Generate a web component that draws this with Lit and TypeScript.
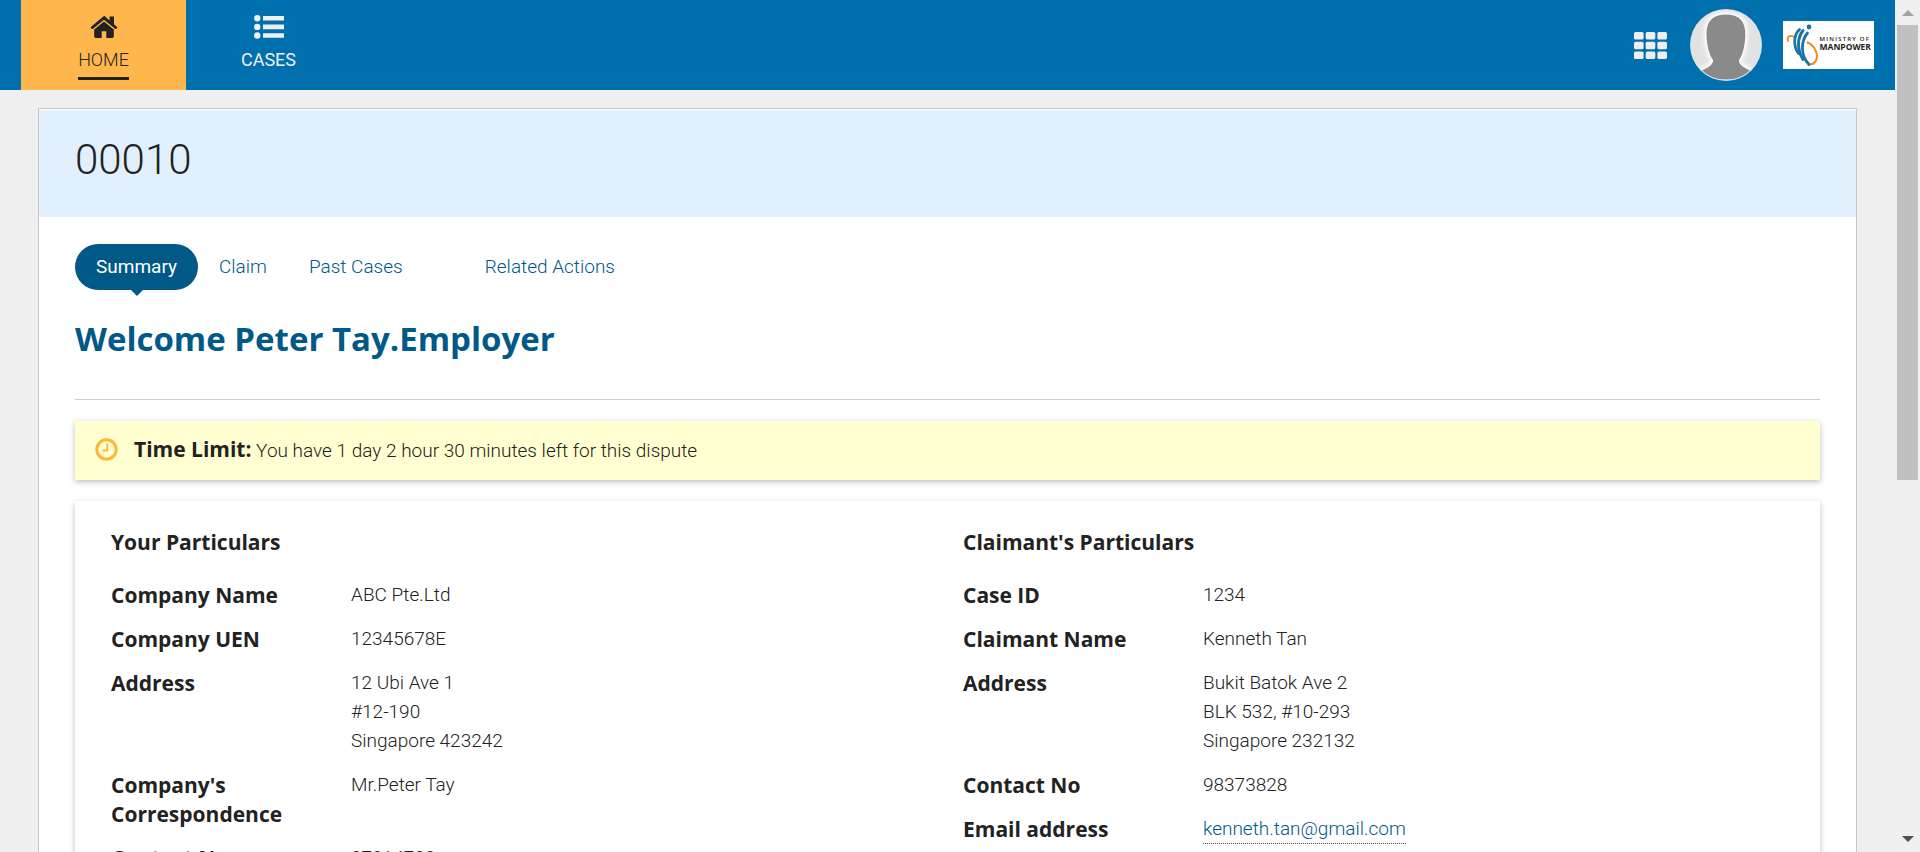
import { LitElement, html, svg, css } from "lit";
import { customElement } from "lit/decorators.js";

interface Row {
  label: string;
  lines: string[];
  href?: string;
}

const EMPLOYER: Row[] = [
  { label: "Company Name", lines: ["ABC Pte.Ltd"] },
  { label: "Company UEN", lines: ["12345678E"] },
  { label: "Address", lines: ["12 Ubi Ave 1", "#12-190", "Singapore 423242"] },
  { label: "Company's Correspondence", lines: ["Mr.Peter Tay"] },
  { label: "Contact No", lines: ["87814788"] },
];

const CLAIMANT: Row[] = [
  { label: "Case ID", lines: ["1234"] },
  { label: "Claimant Name", lines: ["Kenneth Tan"] },
  { label: "Address", lines: ["Bukit Batok Ave 2", "BLK 532, #10-293", "Singapore 232132"] },
  { label: "Contact No", lines: ["98373828"] },
  { label: "Email address", lines: ["kenneth.tan@gmail.com"], href: "mailto:kenneth.tan@gmail.com" },
];

@customElement("particulars-list")
export class ParticularsList extends LitElement {
  static properties = {
    heading: { type: String },
    rows: { attribute: false },
  };
  declare heading: string;
  declare rows: Row[];

  static styles = css`
    :host { display: block; }
    h2 {
      margin: 0 0 24px;
      font: 700 21px/29px "Open Sans", sans-serif;
    }
    dl { margin: 0; display: grid; gap: 15px; }
    .row { display: grid; grid-template-columns: 216px 1fr; column-gap: 24px; }
    dt { font: 700 21px/29px "Open Sans", sans-serif; }
    dd { margin: -1px 0 1px; }
    .line { display: block; }
    a {
      display: inline-block;
      height: 29px;
      color: #005987;
      text-decoration: none;
      border-bottom: 1px dotted #444;
    }
  `;

  render() {
    return html`
      <h2>${this.heading}</h2>
      <dl>
        ${this.rows.map((r) => html`
          <div class="row">
            <dt>${r.label}</dt>
            <dd>${r.href
              ? html`<a href=${r.href}>${r.lines[0]}</a>`
              : r.lines.map((l) => html`<span class="line">${l}</span>`)}</dd>
          </div>`)}
      </dl>`;
  }
}

@customElement("app-root")
export class AppRoot extends LitElement {
  static styles = css`
    :host {
      display: flex;
      height: 100vh;
      overflow: hidden;
      background: #efefef;
      color: #222;
      font: 300 19px/29px Roboto, "Liberation Sans", sans-serif;
    }
    * { box-sizing: border-box; }
    a { text-decoration: none; }
    .page { flex: 1; min-width: 0; overflow: hidden; }

    header {
      display: flex;
      align-items: stretch;
      height: 90px;
      padding: 0 21px;
      background: #006fad;
    }
    .sites { display: flex; flex: 1; }
    .site {
      width: 165px;
      display: flex;
      flex-direction: column;
      align-items: center;
      padding-top: 14px;
      color: #efefef;
      font-size: 18px;
      font-weight: 400;
    }
    .site svg { height: 26px; }
    .site span { margin-top: 5px; height: 35px; border-bottom: 3px solid transparent; }
    .site.current { background: #ffb74d; color: #222; font-weight: 300; }
    .site.current span { border-color: #222; }
    .tools { display: flex; align-items: center; }
    button { border: 0; padding: 0; background: none; display: block; cursor: pointer; }
    .tools svg { display: block; }
    .avatar { margin: 0 21px 0 23px; }

    main {
      margin: 18px 38px 0;
      border: 1px solid #c8c8c8;
      background: #fff;
      min-height: 100vh;
    }
    .record { margin-top: 1px; height: 107px; padding: 21px 36px; background: #e2f0fe; }
    h1 { margin: 0; font-size: 42px; line-height: 58px; font-weight: 300; }
    .body { padding: 27px 36px 0; }

    .tabs { display: flex; height: 46px; }
    .tab { padding: 8px 21px; height: 46px; color: #005987; }
    .tab.current {
      position: relative;
      background: #005987;
      color: #fff;
      border-radius: 23px;
      font-weight: 400;
    }
    .tab.current::after {
      content: "";
      position: absolute;
      top: 100%;
      left: calc(50% - 6px);
      border: 6px solid transparent;
      border-top-color: #005987;
      border-bottom: 0;
    }
    .related { margin-left: 40px; }

    .welcome {
      margin: 26px 0 0;
      padding-bottom: 37px;
      border-bottom: 1px solid #ccc;
      color: #005987;
      font: 700 33px/46px "Open Sans", sans-serif;
    }
    .panel { box-shadow: 0 2px 6px rgba(0, 0, 0, 0.25); }
    .limit {
      display: flex;
      align-items: center;
      margin: 21px 0;
      height: 59px;
      padding: 0 20px 2px;
      gap: 16px;
      background: #ffffd1;
    }
    .limit p { margin: 0; }
    .limit strong { font: 700 21px/29px "Open Sans", sans-serif; }
    .details {
      display: grid;
      grid-template-columns: 1fr 1fr;
      column-gap: 31px;
      padding: 27px 36px 60px;
    }

    .scroll {
      width: 25px;
      display: flex;
      flex-direction: column;
      align-items: center;
      padding: 10px 0;
      background: #f0f0f0;
    }
    .thumb { width: 21px; height: 455px; margin: 9px 0 auto; background: #c0c0c0; }
    .up, .down { display: block; width: 12px; height: 6px; }
  `;

  render() {
    return html`
      <div class="page">
        <header>
          <nav class="sites" aria-label="Sites">
            <a class="site current" href="#home" aria-current="page">
              <svg width="28" height="26" viewBox="0 0 28 26" fill="#222" aria-hidden="true">
                <path d="M14 2 0.8 12.9a.6.6 0 0 0 0 .8l1.1 1.2a.6.6 0 0 0 .8 0L14 5.7l11.3 9.2a.6.6 0 0 0 .8 0l1.1-1.2a.6.6 0 0 0 0-.8L24 10.2V2.5h-4.4v4L16 3.2C15 2.300 14.600 2 14 2Z"/>
                <path d="M14 7.400 4.200 15.400V22.500a1.400 1.400 0 0 0 1.400 1.400H11.700V17.300h4.600v6.600h6.100a1.400 1.400 0 0 0 1.400-1.400V15.400Z"/>
              </svg>
              <span>HOME</span>
            </a>
            <a class="site" href="#cases">
              <svg width="30" height="26" viewBox="0 0 30 26" fill="#efefef" aria-hidden="true">
                <circle cx="3.200" cy="4.300" r="3.200"/><circle cx="3.200" cy="12.900" r="3.200"/><circle cx="3.200" cy="21.500" r="3.200"/>
                <path d="M9 2h21v4.600H9zM9 10.600h21v4.600H9zM9 19.200h21v4.600H9z"/>
              </svg>
              <span>CASES</span>
            </a>
          </nav>
          <div class="tools">
            <button aria-label="Navigation">
              <svg width="33" height="27" viewBox="0 0 33 27" fill="#efefef">
                ${[0, 9.7, 19.4].map((y) => [0, 11.7, 23.4].map((x) => svg`<rect x=${x} y=${y} width="9.600" height="7.600" rx="1.600"/>`))}
              </svg>
            </button>
            <button class="avatar" aria-label="User options">
              <svg width="72" height="72" viewBox="0 0 72 72">
                <defs>
                  <clipPath id="disc"><circle cx="36" cy="36" r="35"/></clipPath>
                  <filter id="halo"><feGaussianBlur stdDeviation="2"/></filter>
                </defs>
                <circle cx="36" cy="36" r="36" fill="#d5e3ec"/>
                <g clip-path="url(#disc)">
                  <rect width="72" height="72" fill="#e2e2e2"/>
                  <path d="M36 5.500C23 5.500 16 12 16.500 26c.3 10 2.500 19.500 6.500 25 .8 4-5 8-12 11v12h50V62c-7-3-13-7-12-11 4-5.500 6-15 6.300-25C55.700 12 49 5.500 36 5.500Z" fill="#fff" stroke="#fff" stroke-width="5" filter="url(#halo)"/>
                  <path d="M36 5.500C23 5.500 16 12 16.500 26c.3 10 2.500 19.500 6.500 25 .8 4-5 8-12 11v8.500h50V62c-7-3-13-7-12-11 4-5.500 6-15 6.300-25C55.700 12 49 5.500 36 5.500Z" fill="#8a8a8a"/>
                </g>
              </svg>
            </button>
            <svg width="91" height="48" viewBox="0 0 91 48" role="img" aria-label="Ministry of Manpower">
              <rect width="91" height="48" fill="#fff"/>
              <g fill="none" stroke-linecap="round">
                <path d="M5 20C3.500 15.500 7 14 10.500 15.500" stroke="#f08a24" stroke-width="1.800"/>
                <path d="M24.500 21.500C31 24 36 33 33 39.500 31.500 42.500 29 43.500 27 43" stroke="#f08a24" stroke-width="2"/>
                <path d="M16.500 8.500C10.500 14 10 25 15.500 32.500" stroke="#1b76a8" stroke-width="2.800"/>
                <path d="M20 9.500C14 17 14 29 20 38.500" stroke="#1b76a8" stroke-width="3"/>
                <path d="M24.500 12C18 20 17 34 26 43.500" stroke="#1b76a8" stroke-width="2.800"/>
              </g>
              <circle cx="26" cy="6" r="2.400" fill="#1b76a8"/>
              <text x="36.500" y="20" font-family="Open Sans, sans-serif" font-weight="600" font-size="6" letter-spacing="1.200" fill="#222">MINISTRY OF</text>
              <text x="36.500" y="28.500" font-family="Open Sans, sans-serif" font-weight="700" font-size="8.500" fill="#222">MANPOWER</text>
            </svg>
          </div>
        </header>

        <main>
          <div class="record"><h1>00010</h1></div>
          <div class="body">
            <nav class="tabs" aria-label="Record views">
              <a class="tab current" href="#summary" aria-current="page">Summary</a>
              <a class="tab" href="#claim">Claim</a>
              <a class="tab" href="#past-cases">Past Cases</a>
              <a class="tab related" href="#related">Related Actions</a>
            </nav>
            <h2 class="welcome">Welcome Peter Tay.Employer</h2>
            <section class="panel limit">
              <svg width="23" height="23" viewBox="0 0 23 23" fill="none" stroke="#ffb833" aria-hidden="true">
                <circle cx="11.500" cy="11.500" r="9.700" stroke-width="3"/>
                <path d="M12.300 5.500V12.500H7.500" stroke-width="1.800"/>
              </svg>
              <p><strong>Time Limit:</strong> You have 1 day 2 hour 30 minutes left for this dispute</p>
            </section>
            <section class="panel details">
              <particulars-list heading="Your Particulars" .rows=${EMPLOYER}></particulars-list>
              <particulars-list heading="Claimant's Particulars" .rows=${CLAIMANT}></particulars-list>
            </section>
          </div>
        </main>
      </div>
      <div class="scroll" aria-hidden="true">
        <svg class="up" viewBox="0 0 12 6"><path d="M6 0 12 6H0Z" fill="#a3a3a3"/></svg>
        <div class="thumb"></div>
        <svg class="down" viewBox="0 0 12 6"><path d="M0 0H12L6 6Z" fill="#505050"/></svg>
      </div>
    `;
  }
}
